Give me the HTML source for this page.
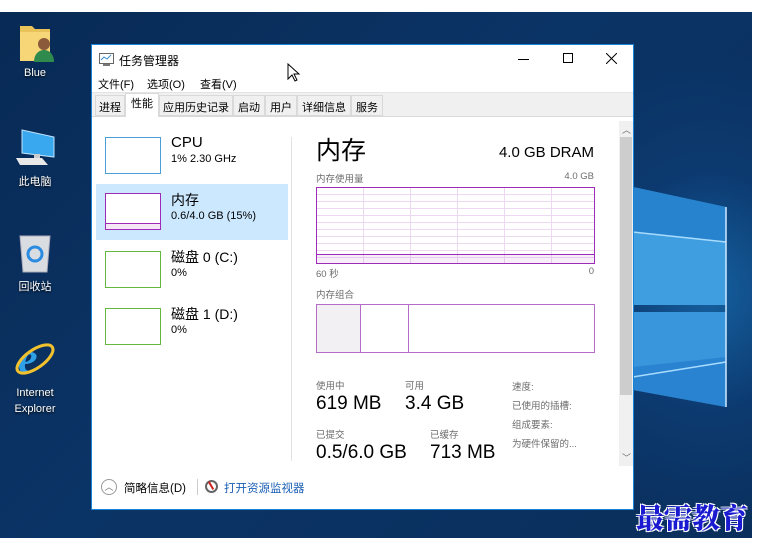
<!DOCTYPE html>
<html><head><meta charset="utf-8"><style>
*{margin:0;padding:0;box-sizing:border-box}
body{width:759px;height:548px;background:#fff;position:relative;overflow:hidden;font-family:"Liberation Sans","Noto Sans CJK SC",sans-serif;color:#000}
.a{position:absolute}
#desk{left:0;top:12px;width:752px;height:526px;background:radial-gradient(ellipse 200px 240px at 710px 280px,#15609f 0%,#0c3a70 50%,rgba(8,40,80,0) 100%),linear-gradient(135deg,#082a55 0%,#0b3466 45%,#0a2f5c 100%);overflow:hidden}
.dl{color:#fff;font-size:11px;text-align:center;width:60px;text-shadow:0 1px 2px #000}
.t{font-size:11px;white-space:nowrap}
.g{color:#6d6d6d;font-size:9.5px;white-space:nowrap}
</style></head><body>
<div id="desk" class="a">
 <svg class="a" style="left:630px;top:150px" width="122" height="260" viewBox="0 0 122 260">
  <polygon points="3,25 96,45 96,143 3,143" fill="#3f9ee0"/>
  <polygon points="3,150 96,150 96,245 3,228" fill="#3a96dc"/>
  <polygon points="3,25 96,45 96,80 3,70" fill="#1f77c8" opacity=".7"/>
  <polygon points="3,205 96,195 96,245 3,228" fill="#1f77c8" opacity=".6"/>
  <line x1="3" y1="70" x2="96" y2="80" stroke="#a8dcff" stroke-width="1.5"/>
  <line x1="3" y1="215" x2="96" y2="200" stroke="#a8dcff" stroke-width="1.5"/>
  <line x1="96" y1="45" x2="96" y2="245" stroke="#cfeaff" stroke-width="1.5"/>
 </svg>
</div>
<svg class="a" style="left:18px;top:22px" width="36" height="42"><path d="M2 4h12l3 3h15v32H2z" fill="#e9c25a"/><rect x="2" y="10" width="30" height="29" fill="#f6d677"/><circle cx="26" cy="22" r="6" fill="#8a5a3a"/><path d="M16 40c0-8 5-12 10-12s10 4 10 12z" fill="#2f8a4e"/></svg>
<div class="a dl" style="left:5px;top:67px">Blue</div>
<svg class="a" style="left:14px;top:127px" width="42" height="40"><polygon points="8,3 40,10 40,30 8,26" fill="#3aa8ee" stroke="#bfe3fb"/><rect x="20" y="27" width="6" height="4" fill="#ccc"/><polygon points="2,31 28,31 34,38 6,38" fill="#e8e8e8"/></svg>
<div class="a dl" style="left:5px;top:173px">此电脑</div>
<svg class="a" style="left:17px;top:232px" width="36" height="42"><path d="M3 4h30l-3 36H6z" fill="#d9dde2" stroke="#aab"/><circle cx="18" cy="22" r="7" fill="none" stroke="#2b8be0" stroke-width="3"/></svg>
<div class="a dl" style="left:5px;top:278px">回收站</div>
<svg class="a" style="left:12px;top:335px" width="46" height="46"><text x="6" y="38" font-size="44" font-family="Liberation Serif" font-style="italic" font-weight="bold" fill="#2fa0e8">e</text><ellipse cx="23" cy="24" rx="21" ry="9" fill="none" stroke="#f2c12e" stroke-width="3" transform="rotate(-35 23 24)"/></svg>
<div class="a dl" style="left:5px;top:385px;line-height:16px">Internet<br>Explorer</div>
<div class="a" style="left:636px;top:497px;font-family:'Noto Serif CJK SC',serif;font-weight:900;font-size:28px;color:#1a1ad0;letter-spacing:0px;text-shadow:1px 1px 0 #fff,-1px -1px 0 #fff,1px -1px 0 #fff,-1px 1px 0 #fff">最需教育</div>

<div class="a" style="left:91px;top:44px;width:543px;height:466px;background:#fff;border:1px solid #1883d7">
 <svg class="a" style="left:7px;top:8px" width="15" height="14"><rect x=".5" y=".5" width="14" height="10" fill="#fff" stroke="#666"/><polyline points="2,7 5,4 8,6 12,2" fill="none" stroke="#3a8ad0"/><rect x="4" y="11" width="7" height="2" fill="#777"/></svg>
 <div class="a t" style="left:27px;top:7px;font-size:12px">任务管理器</div>
 <div class="a" style="left:426px;top:14px;width:11px;height:1px;background:#000"></div>
 <div class="a" style="left:471px;top:8px;width:10px;height:10px;border:1px solid #000"></div>
 <svg class="a" style="left:514px;top:8px" width="11" height="11"><path d="M0 0L11 11M11 0L0 11" stroke="#000"/></svg>
 <div class="a t" style="left:6px;top:31px">文件(F)</div>
 <div class="a t" style="left:55px;top:31px">选项(O)</div>
 <div class="a t" style="left:108px;top:31px">查看(V)</div>
 <svg class="a" style="left:195px;top:18px" width="14" height="20"><path d="M1 1v15l4-4 3 6 2-1-3-6h5z" fill="#fff" stroke="#000"/></svg>
 <div class="a" style="left:0;top:47px;width:541px;height:25px;background:#f0f0f0;border-top:1px solid #e4e4e4"></div>
 <div class="a" style="left:0;top:71px;width:541px;height:1px;background:#d9d9d9"></div>
 <div class="a" style="left:3px;top:50px;display:flex;font-size:11px">
  <div style="padding:3px 3px;border:1px solid #d9d9d9;background:#f0f0f0;height:21px">进程</div>
  <div style="padding:1px 5px;border:1px solid #d9d9d9;border-bottom:none;background:#fff;height:24px;margin-top:-2px">性能</div>
  <div style="padding:3px 3px;border:1px solid #d9d9d9;background:#f0f0f0;height:21px">应用历史记录</div>
  <div style="padding:3px 4px;border:1px solid #d9d9d9;background:#f0f0f0;height:21px">启动</div>
  <div style="padding:3px 4px;border:1px solid #d9d9d9;background:#f0f0f0;height:21px">用户</div>
  <div style="padding:3px 4px;border:1px solid #d9d9d9;background:#f0f0f0;height:21px">详细信息</div>
  <div style="padding:3px 4px;border:1px solid #d9d9d9;background:#f0f0f0;height:21px">服务</div>
 </div>
 <div class="a" style="left:4px;top:139px;width:192px;height:56px;background:#cce8ff"></div>
 <div class="a" style="left:13px;top:92px;width:56px;height:37px;border:1px solid #4a9fd8;background:#fff"></div>
 <div class="a t" style="left:79px;top:89px;font-size:15px">CPU</div><div class="a t" style="left:79px;top:108px">1% 2.30 GHz</div>
 <div class="a" style="left:13px;top:148px;width:56px;height:37px;border:1px solid #9d2bb8;background:#fff"><div class="a" style="left:0;bottom:5px;width:54px;height:1px;background:#9d2bb8"></div><div class="a" style="left:0;bottom:0;width:54px;height:5px;background:#f3e7f5"></div></div>
 <div class="a t" style="left:79px;top:145px;font-size:14px">内存</div><div class="a t" style="left:79px;top:165px">0.6/4.0 GB (15%)</div>
 <div class="a" style="left:13px;top:206px;width:56px;height:37px;border:1px solid #63b83d"></div>
 <div class="a t" style="left:79px;top:202px;font-size:14px">磁盘 0 (C:)</div><div class="a t" style="left:79px;top:222px">0%</div>
 <div class="a" style="left:13px;top:263px;width:56px;height:37px;border:1px solid #63b83d"></div>
 <div class="a t" style="left:79px;top:259px;font-size:14px">磁盘 1 (D:)</div><div class="a t" style="left:79px;top:279px">0%</div>
 <div class="a" style="left:199px;top:92px;width:1px;height:324px;background:#e2e2e2"></div>
 <div class="a t" style="left:224px;top:86px;font-size:25px">内存</div>
 <div class="a t" style="right:39px;top:99px;font-size:15px">4.0 GB DRAM</div>
 <div class="a g" style="left:224px;top:126px">内存使用量</div>
 <div class="a g" style="right:39px;top:126px">4.0 GB</div>
 <div class="a" style="left:224px;top:142px;width:279px;height:77px;border:1px solid #9d2bb8;background:repeating-linear-gradient(180deg,transparent 0 6px,#ecd8f0 6px 7px),repeating-linear-gradient(90deg,transparent 0 46px,#ecd8f0 46px 47px)"><div class="a" style="left:0;bottom:8px;width:277px;height:1px;background:#9d2bb8"></div><div class="a" style="left:0;bottom:0;width:277px;height:8px;background:rgba(157,43,184,.08)"></div></div>
 <div class="a g" style="left:224px;top:221px">60 秒</div>
 <div class="a g" style="right:39px;top:221px">0</div>
 <div class="a g" style="left:224px;top:242px">内存组合</div>
 <div class="a" style="left:224px;top:259px;width:279px;height:49px;border:1px solid #b46cc8"><div class="a" style="left:0;top:0;width:44px;height:47px;background:#f2f0f3;border-right:1px solid #b46cc8"></div><div class="a" style="left:91px;top:0;width:1px;height:47px;background:#b46cc8"></div></div>
 <div class="a g" style="left:224px;top:333px">使用中</div>
 <div class="a t" style="left:224px;top:348px;font-size:19px">619 MB</div>
 <div class="a g" style="left:313px;top:333px">可用</div>
 <div class="a t" style="left:313px;top:348px;font-size:19px">3.4 GB</div>
 <div class="a g" style="left:224px;top:382px">已提交</div>
 <div class="a t" style="left:224px;top:397px;font-size:19px">0.5/6.0 GB</div>
 <div class="a g" style="left:338px;top:382px">已缓存</div>
 <div class="a t" style="left:338px;top:397px;font-size:19px">713 MB</div>
 <div class="a g" style="left:420px;top:333px;line-height:19px">速度:<br>已使用的插槽:<br>组成要素:<br>为硬件保留的...</div>
 <div class="a" style="left:527px;top:76px;width:14px;height:345px;background:#f0f0f0"></div>
 <div class="a" style="left:528px;top:92px;width:12px;height:258px;background:#cdcdcd"></div>
 <div class="a g" style="left:530px;top:78px;font-size:9px">︿</div>
 <div class="a g" style="left:530px;top:406px;font-size:9px">﹀</div>
 <div class="a" style="left:9px;top:434px;width:16px;height:16px;border:1px solid #999;border-radius:50%;font-size:9px;color:#777;text-align:center;line-height:14px">︿</div>
 <div class="a t" style="left:32px;top:435px;font-size:11.5px">简略信息(D)</div>
 <div class="a" style="left:105px;top:434px;width:1px;height:16px;background:#ccc"></div>
 <div class="a" style="left:113px;top:435px;width:13px;height:13px;border:2px solid #666;border-radius:50%;background:#fff"><div class="a" style="left:3px;top:-1px;width:2px;height:9px;background:#c22;transform:rotate(-30deg)"></div></div>
 <div class="a t" style="left:132px;top:435px;font-size:11.5px;color:#1a5fb4">打开资源监视器</div>
</div>
</body></html>
